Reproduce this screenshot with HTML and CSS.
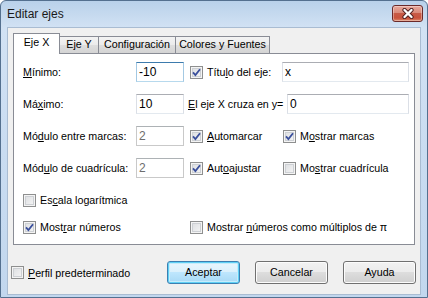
FILE: index.html
```html
<!DOCTYPE html>
<html>
<head>
<meta charset="utf-8">
<link rel="stylesheet" href="styles.css">
</head>
<body>
<div class="window">
  <div class="titlebar">
    <span class="title">Editar ejes</span>
    <span class="close">
      <svg width="14" height="11" viewBox="0 0 14 11">
        <path d="M3.5 2 L10.5 9 M10.5 2 L3.5 9" stroke="#4d1f1f" stroke-width="4.2" stroke-linecap="round"/>
        <path d="M3.5 2 L10.5 9 M10.5 2 L3.5 9" stroke="#fff" stroke-width="2.4" stroke-linecap="round"/>
      </svg>
    </span>
  </div>

  <div class="client">
    <div class="tabs">
      <div class="tab active">Eje X</div>
      <div class="tab tab-y">Eje Y</div>
      <div class="tab tab-conf">Configuración</div>
      <div class="tab tab-col">Colores y Fuentes</div>
    </div>

    <div class="panel">
      <div class="row">
        <span class="lbl"><u>M</u>ínimo:</span>
        <div class="field focus">-10</div>
        <span class="cb on"><svg width="11" height="11" viewBox="0 0 11 11"><path d="M2 5.3 L4.4 8 L9 2.2" /></svg></span>
        <span class="txt">Títu<u>l</u>o del eje:</span>
        <div class="field wide">x</div>
      </div>

      <div class="row">
        <span class="lbl">Má<u>x</u>imo:</span>
        <div class="field">10</div>
        <span class="txt"><u>E</u>l eje X cruza en y=</span>
        <div class="field wide2">0</div>
      </div>

      <div class="row">
        <span class="lbl">Mó<u>d</u>ulo entre marcas:</span>
        <div class="field off">2</div>
        <span class="opt mid">
          <span class="cb on"><svg width="11" height="11" viewBox="0 0 11 11"><path d="M2 5.3 L4.4 8 L9 2.2" /></svg></span>
          <span class="txt"><u>A</u>utomarcar</span>
        </span>
        <span class="opt">
          <span class="cb on"><svg width="11" height="11" viewBox="0 0 11 11"><path d="M2 5.3 L4.4 8 L9 2.2" /></svg></span>
          <span class="txt">M<u>o</u>strar marcas</span>
        </span>
      </div>

      <div class="row">
        <span class="lbl">Mód<u>u</u>lo de cuadrícula:</span>
        <div class="field off">2</div>
        <span class="opt mid">
          <span class="cb on"><svg width="11" height="11" viewBox="0 0 11 11"><path d="M2 5.3 L4.4 8 L9 2.2" /></svg></span>
          <span class="txt">Aut<u>o</u>ajustar</span>
        </span>
        <span class="opt">
          <span class="cb"></span>
          <span class="txt">Mo<u>s</u>trar cuadrícula</span>
        </span>
      </div>

      <div class="row short">
        <span class="opt">
          <span class="cb"></span>
          <span class="txt">Es<u>c</u>ala logarítmica</span>
        </span>
      </div>

      <div class="row">
        <span class="opt first">
          <span class="cb on"><svg width="11" height="11" viewBox="0 0 11 11"><path d="M2 5.3 L4.4 8 L9 2.2" /></svg></span>
          <span class="txt">Most<u>r</u>ar números</span>
        </span>
        <span class="opt">
          <span class="cb"></span>
          <span class="txt">Mostrar <u>n</u>úmeros como múltiplos de π</span>
        </span>
      </div>
    </div>

    <div class="footer">
      <span class="cb"></span>
      <span class="txt"><u>P</u>erfil predeterminado</span>
      <div class="buttons">
        <div class="btn default">Aceptar</div>
        <div class="btn">Cancelar</div>
        <div class="btn">Ayuda</div>
      </div>
    </div>
  </div>
</div>
</body>
</html>
```

FILE: styles.css
```css
* {
  box-sizing: border-box;
}

body {
  margin: 0;
  font-family: "Liberation Sans", Arial, sans-serif;
  font-size: 10.7px;
  color: #000;
  background: #fff;
}

u {
  text-decoration: underline;
  text-underline-offset: 1px;
}

/* window frame */
.window {
  width: 428px;
  height: 298px;
  border: 1px solid #54708f;
  border-radius: 6px 6px 0 0;
  background: linear-gradient(#b9d1ea, #c6daef 14px, #d2e2f4 27px, #c9dcf1 150px, #c2d7ee);
  padding: 0 7px 3px;
  display: flex;
  flex-direction: column;
}

.titlebar {
  height: 27px;
  display: flex;
  align-items: flex-start;
  justify-content: space-between;
}

.title {
  font-size: 12px;
  margin: 6px 0 0 -1px;
  color: #1a1a1a;
}

.close {
  width: 31px;
  height: 17px;
  margin: 4px -3px 0 0;
  border: 1px solid #6b2a2a;
  border-radius: 3px;
  background: linear-gradient(#e9a99c, #d98a7a 45%, #c75a46 50%, #c9523c 80%, #dd8a6b);
  box-shadow: inset 0 0 0 1px rgba(255, 255, 255, 0.35);
  display: flex;
  align-items: center;
  justify-content: center;
}

.client {
  flex: 1;
  background: #f0f0f0;
  box-shadow: 0 0 0 1px #a9bcd2;
}

/* tabs */
.tabs {
  display: flex;
  align-items: flex-end;
  height: 21px;
  margin: 5px 5px 0;
}

.tab {
  height: 17px;
  margin-bottom: 1px;
  margin-left: -1px;
  border: 1px solid #898c95;
  border-bottom: none;
  background: linear-gradient(#f3f3f3, #ebebeb 50%, #dedede 50%, #d4d4d4);
  text-align: center;
  line-height: 15px;
}

.tab.active {
  width: 47px;
  height: 21px;
  margin: 0;
  background: #fff;
  z-index: 1;
  line-height: 17px;
}

.tab-y {
  width: 40px;
}

.tab-conf {
  width: 78px;
}

.tab-col {
  width: 95px;
}

.panel {
  height: 192px;
  margin: -1px 5px 0;
  border: 1px solid #898c95;
  background: #fff;
  padding: 8px 5px 0 9px;
}

.row {
  display: flex;
  align-items: center;
  height: 20px;
  margin-bottom: 12px;
}

.row.short {
  margin-bottom: 7px;
}

.lbl {
  width: 113px;
}

.field {
  width: 48px;
  height: 20px;
  border: 1px solid #dbdfe6;
  border-top-color: #abadb3;
  border-bottom-color: #e3e9ef;
  background: #fff;
  padding: 0 2px;
  line-height: 18px;
  font-size: 12px;
}

.field.focus {
  border-color: #a4c9e3;
  border-top-color: #3d7bad;
  border-bottom-color: #b7d9ed;
}

.field.off {
  border-color: #c9c9c9;
  border-top-color: #adb2b5;
  color: #6d6d6d;
}

.field.wide {
  width: 127px;
  margin-left: auto;
}

.field.wide2 {
  width: 122px;
  margin-left: auto;
}

.txt {
  margin-left: 4px;
  white-space: nowrap;
}

.row > .cb {
  margin-left: 6px;
}

.opt {
  display: flex;
  align-items: center;
}

.opt.mid {
  width: 93px;
  margin-left: 6px;
}

.opt.first {
  width: 167px;
}

/* checkbox */
.cb {
  flex: none;
  width: 13px;
  height: 13px;
  border: 1px solid #8e8f8f;
  background: linear-gradient(135deg, #dadcdf, #f7f7f7);
  box-shadow: inset 0 0 0 1px #f4f4f4, inset 0 0 0 2px #cdd0d4;
  display: flex;
}

.cb svg path {
  fill: none;
  stroke: #3a4f9c;
  stroke-width: 1.8;
}

/* bottom */
.footer {
  display: flex;
  align-items: center;
  height: 23px;
  margin-top: 16px;
  padding: 0 4px 0 3px;
}

.buttons {
  display: flex;
  gap: 15px;
  margin-left: auto;
}

.btn {
  width: 73px;
  height: 23px;
  border: 1px solid #707070;
  border-radius: 3px;
  background: linear-gradient(#f2f2f2, #ebebeb 50%, #dddddd 50%, #cfcfcf);
  box-shadow: inset 0 0 0 1px #fcfcfc;
  text-align: center;
  line-height: 21px;
}

.btn.default {
  border-color: #3c7fb1;
  background: linear-gradient(#eaf6fd, #d9f0fc 50%, #bee6fd 50%, #a7d9f5);
  box-shadow: inset 0 0 0 1px #5fd0f5, inset 0 0 0 2px #c6ecfb;
}
```
